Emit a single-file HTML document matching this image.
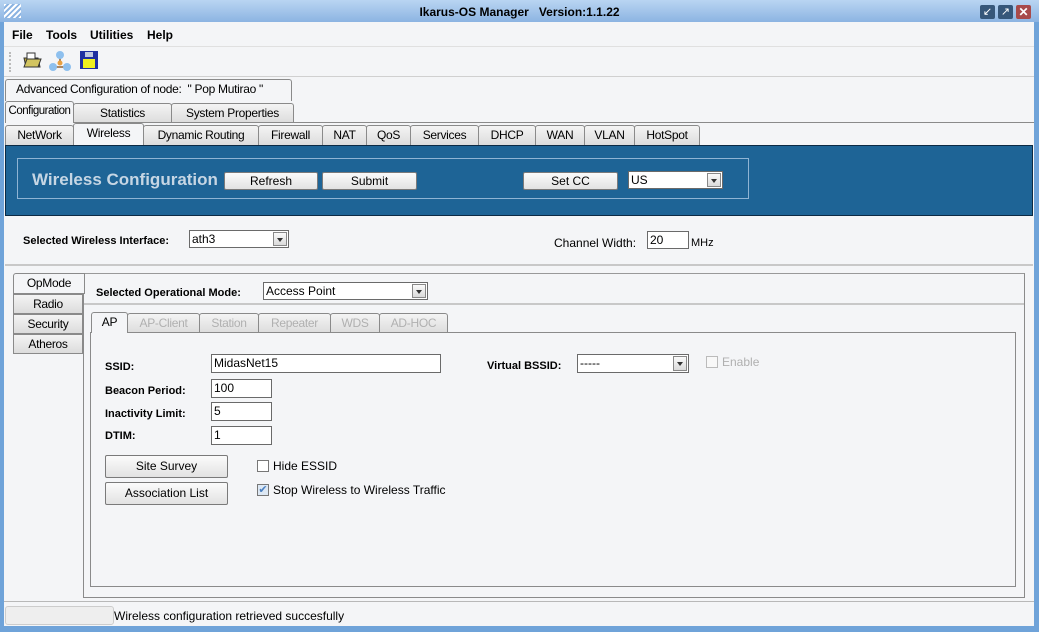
<!DOCTYPE html>
<html><head><meta charset="utf-8"><style>
*{box-sizing:border-box;margin:0;padding:0}
body{width:1039px;height:632px;position:relative;overflow:hidden;background:#f4f5f7;font-family:"Liberation Sans",sans-serif;font-size:12px;color:#000}
.a{position:absolute}
.t{position:absolute;white-space:nowrap;line-height:1}
.tab{position:absolute;border:1px solid #8a8a8a;border-bottom:none;border-radius:3px 3px 0 0;background:linear-gradient(#f4f4f4,#dcdcdc);text-align:center;font-size:12px;letter-spacing:-0.3px;line-height:19px;white-space:nowrap;overflow:visible}
.tab.s{background:#f4f5f7;z-index:2}
.btn{position:absolute;border:1px solid #7a7a7a;border-radius:2px;background:linear-gradient(#fbfbfb,#e2e2e2);text-align:center;font-size:12px;white-space:nowrap}
.inp{position:absolute;border:1px solid #6a6a6a;background:#fff;font-size:12px;padding-left:2px;white-space:nowrap}
.dd{position:absolute;right:1px;top:1px;width:14px;bottom:1px;border:1px solid #888;background:linear-gradient(#fafafa,#dadada)}
.dd:after{content:"";position:absolute;left:3px;top:5px;border-left:3px solid transparent;border-right:3px solid transparent;border-top:4px solid #333}
.b{font-weight:bold;font-size:11px}
.dis{color:#b0b0b0}
</style></head><body>
<div class="a" style="left:0;top:0;width:1039px;height:22px;background:linear-gradient(#b9d5f2,#8cb4e2)"></div>
<div class="a" style="left:4px;top:4px;width:17px;height:14px;background:repeating-linear-gradient(135deg,#fff 0 2px,#8cb4e2 2px 4px)"></div>
<div class="t" style="left:0;width:1039px;text-align:center;top:6px;font-weight:bold;font-size:12px">Ikarus-OS Manager &nbsp;&nbsp;Version:1.1.22</div>
<div class="a" style="left:980px;top:5px;width:15px;height:14px;background:#36577a;border-radius:2px;color:#fff;font-size:11px;text-align:center;line-height:14px">↙</div>
<div class="a" style="left:998px;top:5px;width:15px;height:14px;background:#36577a;border-radius:2px;color:#fff;font-size:11px;text-align:center;line-height:14px">↗</div>
<div class="a" style="left:1016px;top:5px;width:15px;height:14px;background:#a84a4a;border-radius:2px;color:#fff;font-size:12px;font-weight:bold;text-align:center;line-height:14px">✕</div>
<div class="a" style="left:0;top:22px;width:4px;height:610px;background:#6fa3d9"></div>
<div class="a" style="left:1034px;top:22px;width:5px;height:610px;background:#6fa3d9"></div>
<div class="a" style="left:0;top:626px;width:1039px;height:6px;background:#6fa3d9"></div>
<div class="t" style="left:12px;top:29px;font-weight:bold">File</div>
<div class="t" style="left:46px;top:29px;font-weight:bold">Tools</div>
<div class="t" style="left:90px;top:29px;font-weight:bold">Utilities</div>
<div class="t" style="left:147px;top:29px;font-weight:bold">Help</div>
<div class="a" style="left:4px;top:46px;width:1030px;height:1px;background:#e0e0e0"></div>
<div class="a" style="left:9px;top:52px;width:2px;height:20px;border-left:2px dotted #bbb"></div>
<svg class="a" style="left:22px;top:50px" width="20" height="20"><path d="M2 8h14l2 9H4z" fill="#b8a53a" stroke="#333"/><path d="M5 3h8v8H5z" fill="#fff" stroke="#333"/><path d="M2 17l3-8h14l-3 8z" fill="#d2c460" stroke="#333"/></svg>
<svg class="a" style="left:49px;top:50px" width="22" height="22"><line x1="11" y1="5" x2="11" y2="13" stroke="#a86" stroke-width="2"/><line x1="4" y1="17" x2="18" y2="17" stroke="#a86" stroke-width="2"/><circle cx="11" cy="5" r="4" fill="#8ec0ee"/><circle cx="4" cy="17" r="4" fill="#8ec0ee"/><circle cx="18" cy="17" r="4" fill="#8ec0ee"/><circle cx="11" cy="13" r="2.5" fill="#e8a040"/></svg>
<svg class="a" style="left:80px;top:51px" width="18" height="18"><rect x="0" y="0" width="18" height="18" fill="#2030a0"/><rect x="3" y="8" width="12" height="9" fill="#f0f020"/><rect x="5" y="1" width="8" height="5" fill="#c0c8e0"/></svg>
<div class="a" style="left:4px;top:76px;width:1030px;height:1px;background:#d0d0d0"></div>
<div class="tab s" style="left:5px;top:79px;width:287px;height:22px;text-align:left;padding-left:10px">Advanced Configuration of node: &nbsp;" Pop Mutirao "</div>
<div class="tab s" style="left:5px;top:101px;width:69px;height:22px;font-size:11.5px;letter-spacing:-0.5px">Configuration</div>
<div class="tab" style="left:73px;top:103px;width:99px;height:20px">Statistics</div>
<div class="tab" style="left:171px;top:103px;width:123px;height:20px">System Properties</div>
<div class="a" style="left:5px;top:122px;width:1029px;height:1px;background:#8a8a8a"></div>
<div class="tab" style="left:5px;top:125px;width:69px;height:20px">NetWork</div>
<div class="tab s" style="left:73px;top:123px;width:71px;height:22px">Wireless</div>
<div class="tab" style="left:143px;top:125px;width:116px;height:20px">Dynamic Routing</div>
<div class="tab" style="left:258px;top:125px;width:65px;height:20px">Firewall</div>
<div class="tab" style="left:322px;top:125px;width:45px;height:20px">NAT</div>
<div class="tab" style="left:366px;top:125px;width:45px;height:20px">QoS</div>
<div class="tab" style="left:410px;top:125px;width:69px;height:20px">Services</div>
<div class="tab" style="left:478px;top:125px;width:58px;height:20px">DHCP</div>
<div class="tab" style="left:535px;top:125px;width:50px;height:20px">WAN</div>
<div class="tab" style="left:584px;top:125px;width:51px;height:20px">VLAN</div>
<div class="tab" style="left:634px;top:125px;width:66px;height:20px">HotSpot</div>
<div class="a" style="left:5px;top:145px;width:1028px;height:71px;background:#1e6496;border:1px solid #0c2a44"></div>
<div class="a" style="left:17px;top:158px;width:732px;height:41px;border:1px solid #8fb4d4"></div>
<div class="t" style="left:32px;top:171px;font-weight:bold;font-size:17px;color:#c6d6e4">Wireless Configuration</div>
<div class="btn" style="left:224px;top:172px;width:94px;height:18px;line-height:16px">Refresh</div>
<div class="btn" style="left:322px;top:172px;width:95px;height:18px;line-height:16px">Submit</div>
<div class="btn" style="left:523px;top:172px;width:95px;height:18px;line-height:16px">Set CC</div>
<div class="inp" style="left:628px;top:171px;width:95px;height:18px;line-height:16px">US<div class="dd"></div></div>
<div class="t b" style="left:23px;top:236px">Selected Wireless Interface:</div>
<div class="inp" style="left:189px;top:230px;width:100px;height:18px;line-height:16px">ath3<div class="dd"></div></div>
<div class="t" style="left:554px;top:237px">Channel Width:</div>
<div class="inp" style="left:647px;top:231px;width:42px;height:18px;line-height:16px">20</div>
<div class="t" style="left:691px;top:238px;font-size:11px">MHz</div>
<div class="a" style="left:5px;top:264px;width:1028px;height:2px;background:#c8c8c8"></div>
<div class="tab s" style="left:13px;top:273px;width:72px;height:21px;border-bottom:1px solid #8a8a8a;border-radius:3px 0 0 0">OpMode</div>
<div class="tab" style="left:13px;top:294px;width:70px;height:20px;border-bottom:1px solid #8a8a8a;border-radius:0">Radio</div>
<div class="tab" style="left:13px;top:314px;width:70px;height:20px;border-bottom:1px solid #8a8a8a;border-radius:0">Security</div>
<div class="tab" style="left:13px;top:334px;width:70px;height:20px;border-bottom:1px solid #8a8a8a;border-radius:0">Atheros</div>
<div class="a" style="left:83px;top:273px;width:942px;height:325px;border:1px solid #8a8a8a;border-top-color:#999"></div>
<div class="t b" style="left:96px;top:288px">Selected Operational Mode:</div>
<div class="inp" style="left:263px;top:282px;width:165px;height:18px;line-height:16px">Access Point<div class="dd"></div></div>
<div class="a" style="left:84px;top:303px;width:940px;height:2px;background:#c8c8c8"></div>
<div class="tab s" style="left:91px;top:312px;width:37px;height:21px">AP</div>
<div class="tab dis" style="left:127px;top:313px;width:73px;height:20px">AP-Client</div>
<div class="tab dis" style="left:199px;top:313px;width:60px;height:20px">Station</div>
<div class="tab dis" style="left:258px;top:313px;width:73px;height:20px">Repeater</div>
<div class="tab dis" style="left:330px;top:313px;width:50px;height:20px">WDS</div>
<div class="tab dis" style="left:379px;top:313px;width:69px;height:20px">AD-HOC</div>
<div class="a" style="left:90px;top:332px;width:926px;height:255px;border:1px solid #8a8a8a"></div>
<div class="t b" style="left:105px;top:362px">SSID:</div>
<div class="inp" style="left:211px;top:354px;width:230px;height:19px;line-height:17px">MidasNet15</div>
<div class="t b" style="left:105px;top:386px">Beacon Period:</div>
<div class="inp" style="left:211px;top:379px;width:61px;height:19px;line-height:17px">100</div>
<div class="t b" style="left:105px;top:409px">Inactivity Limit:</div>
<div class="inp" style="left:211px;top:402px;width:61px;height:19px;line-height:17px">5</div>
<div class="t b" style="left:105px;top:431px">DTIM:</div>
<div class="inp" style="left:211px;top:426px;width:61px;height:19px;line-height:17px">1</div>
<div class="t b" style="left:487px;top:361px">Virtual BSSID:</div>
<div class="inp" style="left:577px;top:354px;width:112px;height:19px;line-height:17px">-----<div class="dd"></div></div>
<div class="a" style="left:706px;top:356px;width:12px;height:12px;border:1px solid #bbb;background:#f8f8f8"></div>
<div class="t dis" style="left:722px;top:356px">Enable</div>
<div class="btn" style="left:105px;top:455px;width:123px;height:23px;line-height:21px">Site Survey</div>
<div class="btn" style="left:105px;top:482px;width:123px;height:23px;line-height:21px">Association List</div>
<div class="a" style="left:257px;top:460px;width:12px;height:12px;border:1px solid #777;background:#fff"></div>
<div class="t" style="left:273px;top:460px">Hide ESSID</div>
<div class="a" style="left:257px;top:484px;width:12px;height:12px;border:1px solid #777;background:#dde8f4;color:#4a7fc0;font-size:11px;line-height:10px;text-align:center">✔</div>
<div class="t" style="left:273px;top:484px">Stop Wireless to Wireless Traffic</div>
<div class="a" style="left:4px;top:601px;width:1030px;height:1px;background:#b8b8b8"></div>
<div class="a" style="left:5px;top:606px;width:109px;height:19px;border:1px solid #ccc;border-radius:3px;background:#eee"></div>
<div class="t" style="left:114px;top:610px">Wireless configuration retrieved succesfully</div>
</body></html>
